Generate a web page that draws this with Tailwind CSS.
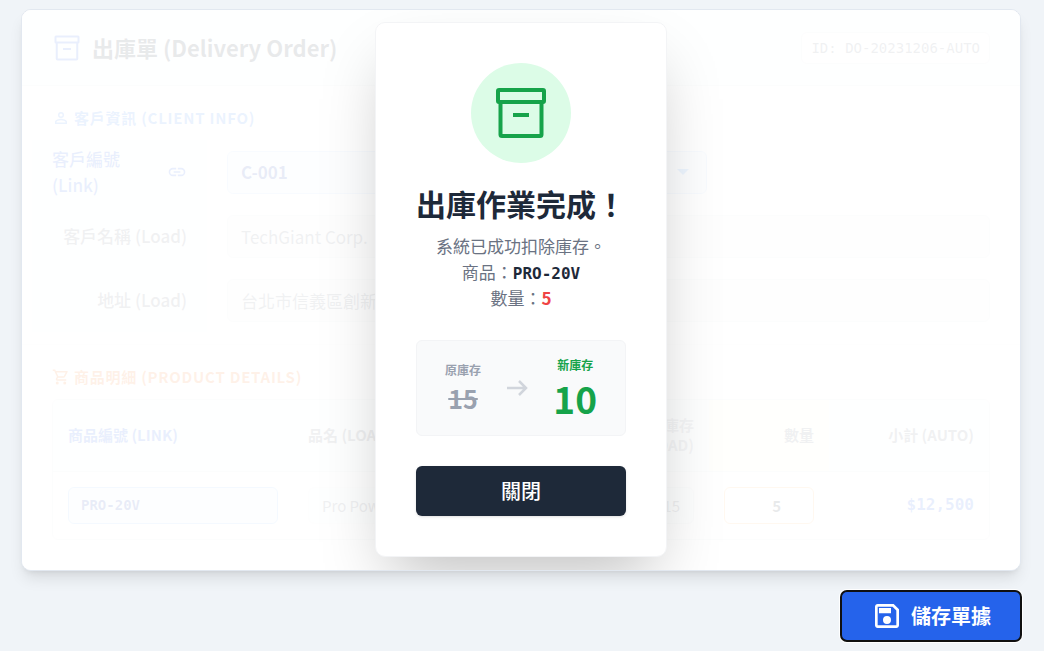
<!DOCTYPE html>
<html lang="zh-Hant">
<head>
    <meta charset="UTF-8">
    <meta name="viewport" content="width=device-width, initial-scale=1.0">
    <title>出庫單 (Delivery Order)</title>
    <script src="https://cdn.jsdelivr.net/npm/@tailwindcss/browser@4"></script>
</head>
<body class="min-h-screen bg-[#f0f4f8] pt-[9px] pb-[10px] pl-[21px] pr-[23px] font-['Noto_Sans_CJK_TC',sans-serif] text-[17px] text-gray-800">

    <!-- Shared icons -->
    <svg class="hidden">
        <symbol id="icon-box" viewBox="0 0 60 60">
            <g fill="none" stroke="currentColor" stroke-width="4" stroke-linejoin="round">
                <rect x="7" y="7" width="46" height="12" rx="1"/>
                <path d="M9.5 19v32.500q0 1.500 1.500 1.500h38q1.500 0 1.500-1.500V19"/>
                <path d="M22 32h16"/>
            </g>
        </symbol>
    </svg>

    <div class="relative overflow-hidden rounded-[10px] border border-slate-200 bg-white shadow-lg">
        <!-- Header -->
        <div class="flex h-[76px] items-center justify-between border-b border-gray-200 bg-gray-50 px-[30px]">
            <h1 class="flex items-center gap-[10px] text-[22px] font-bold">
                <svg class="size-[30px] text-[#2563eb]"><use href="#icon-box"/></svg>
                出庫單 (Delivery Order)
            </h1>
            <span class="rounded-md border border-gray-200 bg-white px-[9px] py-1 font-['DejaVu_Sans_Mono',monospace] text-[14px] leading-[22px] text-gray-500">ID: DO-20231206-AUTO</span>
        </div>

        <!-- Client info -->
        <section class="border-b border-gray-100 px-[10px] pt-5 pb-3">
            <h2 class="mb-[10px] flex h-6 items-center gap-1 px-5 text-[15px] font-bold tracking-wider text-[#3b82f6]">
                <svg class="size-[18px]" viewBox="0 0 24 24" fill="currentColor"><path d="M12 5.900a2.100 2.100 0 1 1 0 4.200 2.100 2.100 0 0 1 0-4.200m0 9c2.970 0 6.100 1.460 6.100 2.100v1.100H5.900V17c0-.64 3.130-2.100 6.100-2.100M12 4a4 4 0 1 0 0 8 4 4 0 0 0 0-8m0 9c-2.670 0-8 1.340-8 4v3h16v-3c0-2.660-5.330-4-8-4"/></svg>
                客戶資訊 (CLIENT INFO)
            </h2>
            <div class="grid grid-cols-[175px_1fr]">
                <div class="flex h-16 items-center justify-between bg-gray-50 px-5 leading-[26px] text-[#2563eb]">
                    <label for="clientId" class="w-[90px] font-medium">客戶編號 (Link)</label>
                    <svg class="size-5" viewBox="0 0 24 24" fill="currentColor"><path d="M3.900 12c0-1.710 1.390-3.100 3.100-3.100h4V7H7a5 5 0 0 0 0 10h4v-1.900H7A3.100 3.100 0 0 1 3.900 12M8 13h8v-2H8zm9-6h-4v1.900h4a3.100 3.100 0 0 1 0 6.200h-4V17h4a5 5 0 0 0 0-10"/></svg>
                </div>
                <div class="flex h-16 items-center px-5">
                    <div class="relative w-[480px]">
                        <select id="clientId" class="h-[43px] w-full appearance-none rounded-md border border-blue-200 bg-blue-50 px-[13px] font-bold text-[#1e40af]">
                            <option>C-001</option>
                        </select>
                        <svg class="pointer-events-none absolute top-[18px] right-[18px] h-[7px] w-3 text-blue-400" viewBox="0 0 12 7" fill="currentColor"><path d="M0 0h12L6 6z"/></svg>
                    </div>
                </div>
                <label for="clientName" class="flex h-16 items-center justify-end bg-gray-50 px-5 font-medium text-gray-500">客戶名稱 (Load)</label>
                <div class="flex h-16 items-center px-5">
                    <input id="clientName" type="text" readonly value="TechGiant Corp." class="h-[43px] w-full rounded-md border border-gray-200 bg-gray-100 px-[13px] text-gray-500">
                </div>
                <label for="clientAddress" class="flex h-16 items-center justify-end bg-gray-50 px-5 font-medium text-gray-500">地址 (Load)</label>
                <div class="flex h-16 items-center px-5">
                    <input id="clientAddress" type="text" readonly value="台北市信義區創新路1號" class="h-[43px] w-full rounded-md border border-gray-200 bg-gray-100 px-[13px] text-gray-500">
                </div>
            </div>
        </section>

        <!-- Product details -->
        <section class="px-[30px] pt-5 pb-[30px]">
            <h2 class="mb-[10px] flex h-6 items-center gap-1 text-[15px] font-bold tracking-wider text-[#f97316]">
                <svg class="size-[18px]" viewBox="0 0 24 24" fill="currentColor"><path d="M15.550 13c.75 0 1.410-.41 1.750-1.030l3.580-6.490A1 1 0 0 0 20.010 4H5.210l-.94-2H1v2h2l3.600 7.590-1.350 2.440C4.520 15.370 5.480 17 7 17h12v-2H7l1.100-2zM6.160 6h12.150l-2.760 5H8.530zM7 18a2 2 0 1 0 0 4 2 2 0 0 0 0-4m10 0a2 2 0 1 0 0 4 2 2 0 0 0 0-4"/></svg>
                商品明細 (PRODUCT DETAILS)
            </h2>
            <div class="overflow-hidden rounded-md border border-gray-200">
                <table class="w-full table-fixed text-[15px]">
                    <thead>
                        <tr class="h-[71px] border-b border-gray-200 bg-gray-50 leading-5">
                            <th class="w-[240px] px-[15px] text-left font-bold text-[#2563eb]">商品編號 (LINK)</th>
                            <th class="px-[15px] text-left font-bold text-gray-500">品名 (LOAD)</th>
                            <th class="w-[120px] px-[15px] text-right font-bold text-gray-400">目前庫存 (LOAD)</th>
                            <th class="w-[120px] bg-yellow-50 px-[15px] text-right font-bold text-gray-500">數量</th>
                            <th class="w-[160px] px-[15px] text-right font-bold text-gray-500">小計 (AUTO)</th>
                        </tr>
                    </thead>
                    <tbody>
                        <tr class="h-[68px]">
                            <td class="px-[15px]"><input type="text" aria-label="商品編號" value="PRO-20V" class="block h-[37px] w-full rounded-md border border-blue-300 bg-blue-50 px-3 font-['DejaVu_Sans_Mono',monospace] text-[14px] font-bold text-[#1e40af]"></td>
                            <td class="px-[15px]"><input type="text" aria-label="品名" readonly value="Pro Power Drill" class="block h-[37px] w-full rounded-md border border-gray-100 bg-gray-50 px-[13px] text-[15px] text-gray-500"></td>
                            <td class="px-[15px]"><input type="text" aria-label="目前庫存" readonly value="15" class="block h-[37px] w-full rounded-md border border-gray-200 bg-gray-50 px-[13px] text-right text-gray-500"></td>
                            <td class="px-[15px]"><input type="text" aria-label="數量" value="5" class="block h-[37px] w-full rounded-md border border-orange-300 bg-white pr-8 text-right text-[15px] font-bold"></td>
                            <td class="px-[15px] text-right font-['DejaVu_Sans_Mono',monospace] text-[16px] font-bold text-[#2563eb]">$12,500</td>
                        </tr>
                    </tbody>
                </table>
            </div>
        </section>

        <!-- Success overlay -->
        <div class="absolute inset-0 flex items-center justify-center bg-white/90 pb-0.5">
            <div role="dialog" aria-labelledby="dialogTitle" class="w-[292px] rounded-[10px] border border-gray-100 bg-white p-10 text-center shadow-[0_31px_62px_-15px_rgba(0,0,0,0.25)]">
                <div class="mx-auto mb-5 flex size-[100px] items-center justify-center rounded-full bg-[#dcfce7] text-[#16a34a]">
                    <svg class="size-[60px]"><use href="#icon-box"/></svg>
                </div>
                <h2 id="dialogTitle" class="mb-[10px] text-[30px] leading-10 font-bold whitespace-nowrap">出庫作業完成！</h2>
                <p class="mb-[29px] leading-[26px] text-gray-500">
                    系統已成功扣除庫存。<br>
                    商品：<span class="font-['DejaVu_Sans_Mono',monospace] text-[16px] leading-none font-bold text-gray-800">PRO-20V</span><br>
                    數量：<span class="font-bold text-[#ef4444]">5</span>
                </p>
                <div class="mb-[30px] flex h-24 items-center justify-between rounded-md border border-gray-100 bg-gray-50 px-7">
                    <div>
                        <p class="text-[12px] leading-5 font-bold text-gray-400">原庫存</p>
                        <p class="text-[25px] leading-9 font-bold text-gray-400 line-through">15</p>
                    </div>
                    <svg class="size-[30px] text-gray-300" viewBox="0 0 30 30" fill="none" stroke="currentColor" stroke-width="2.500"><path d="M5 15h19M17 8l7 7-7 7"/></svg>
                    <div class="text-[#16a34a]">
                        <p class="text-[12px] leading-5 font-bold">新庫存</p>
                        <p class="text-[37px] leading-[46px] font-bold">10</p>
                    </div>
                </div>
                <button type="button" class="h-[50px] w-full rounded-md bg-gray-800 text-[20px] font-medium text-white shadow-sm">關閉</button>
            </div>
        </div>
    </div>

    <div class="mt-5 flex justify-end">
        <button type="button" class="flex h-[50px] items-center gap-2 rounded-md bg-[#2563eb] px-[30px] text-[20px] font-bold text-white shadow-[0_0_0_2px_white] outline-2 -outline-offset-1 outline-[#101010]">
            <svg class="size-8" viewBox="0 0 24 24" fill="currentColor"><path d="M17 3H5c-1.110 0-2 .9-2 2v14c0 1.100.89 2 2 2h14c1.100 0 2-.9 2-2V7zm2 16H5V5h11.170L19 7.830zm-7-7a3 3 0 1 0 0 6 3 3 0 0 0 0-6M6 6h9v4H6z"/></svg>
            儲存單據
        </button>
    </div>
</body>
</html>
